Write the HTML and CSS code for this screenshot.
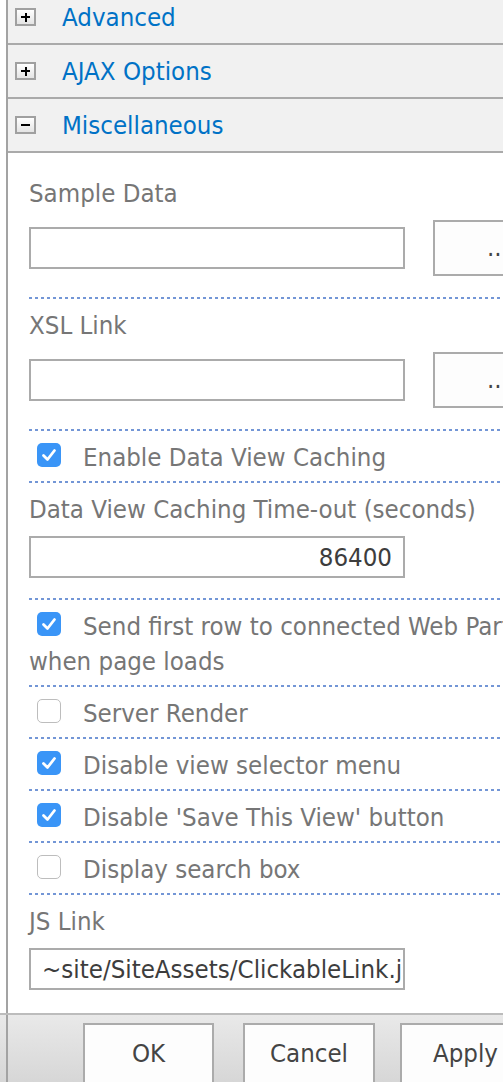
FILE: index.html
```html
<!DOCTYPE html>
<html lang="en">
<head>
<meta charset="utf-8">
<title>Tool Pane</title>
<link rel="stylesheet" href="styles.css">
</head>
<body>
<div class="frame">
  <div class="pane">
    <div class="headers">
      <div class="hdr"><span class="toggle"><span class="bar-h"></span><span class="bar-v"></span></span><span class="hdr-text">Advanced</span></div>
      <div class="hdr"><span class="toggle"><span class="bar-h"></span><span class="bar-v"></span></span><span class="hdr-text">AJAX Options</span></div>
      <div class="hdr"><span class="toggle"><span class="bar-h"></span></span><span class="hdr-text">Miscellaneous</span></div>
    </div>
    <div class="section">
      <div class="field first">
        <div class="label">Sample Data</div>
        <div class="ctl-row"><span class="input"></span><span class="btn-more">...</span></div>
      </div>
      <div class="field">
        <div class="label">XSL Link</div>
        <div class="ctl-row"><span class="input"></span><span class="btn-more">...</span></div>
      </div>
      <div class="check-row"><span class="cb on"><svg viewBox="0 0 24 24" width="24" height="24"><path d="M6.5 12.5 L10.5 16.5 L17.5 7.5" fill="none" stroke="#fff" stroke-width="2.8" stroke-linecap="round" stroke-linejoin="round"/></svg></span>Enable Data View Caching</div>
      <div class="field short">
        <div class="label">Data View Caching Time-out (seconds)</div>
        <div class="ctl-row"><span class="input num">86400</span></div>
      </div>
      <div class="check-row"><span class="cb on"><svg viewBox="0 0 24 24" width="24" height="24"><path d="M6.5 12.5 L10.5 16.5 L17.5 7.5" fill="none" stroke="#fff" stroke-width="2.8" stroke-linecap="round" stroke-linejoin="round"/></svg></span>Send first row to connected Web Part when page loads</div>
      <div class="check-row"><span class="cb"></span>Server Render</div>
      <div class="check-row"><span class="cb on"><svg viewBox="0 0 24 24" width="24" height="24"><path d="M6.5 12.5 L10.5 16.5 L17.5 7.5" fill="none" stroke="#fff" stroke-width="2.8" stroke-linecap="round" stroke-linejoin="round"/></svg></span>Disable view selector menu</div>
      <div class="check-row"><span class="cb on"><svg viewBox="0 0 24 24" width="24" height="24"><path d="M6.5 12.5 L10.5 16.5 L17.5 7.5" fill="none" stroke="#fff" stroke-width="2.8" stroke-linecap="round" stroke-linejoin="round"/></svg></span>Disable 'Save This View' button</div>
      <div class="check-row"><span class="cb"></span>Display search box</div>
      <div class="field last">
        <div class="label">JS Link</div>
        <div class="ctl-row"><span class="input text">~site/SiteAssets/ClickableLink.js</span></div>
      </div>
    </div>
  </div>
</div>
<div class="footer">
  <div class="footer-inner">
    <span class="fbtn">OK</span>
    <span class="fbtn cancel">Cancel</span>
    <span class="fbtn apply">Apply</span>
  </div>
</div>
</body>
</html>
```
FILE: styles.css
```css
html, body {
  margin: 0;
  padding: 0;
  overflow: hidden;
  background: #ffffff;
}
body {
  width: 503px;
  height: 1082px;
  font-family: "DejaVu Sans Condensed", "DejaVu Sans", sans-serif;
  font-stretch: condensed;
  font-size: 25.6px;
  line-height: 35px;
  color: #767676;
}
.frame {
  padding-left: 6px;
  width: 575px;
}
.pane {
  border-left: 2px solid #a3a3a3;
}
.headers {
  margin-top: -9px;
  background: #f1f1f1;
}
.hdr {
  height: 52px;
  border-bottom: 2px solid #aaaaaa;
  display: flex;
  align-items: center;
  padding-left: 7px;
}
.toggle {
  box-sizing: border-box;
  width: 21px;
  height: 18px;
  border: 2px solid #a0a0a0;
  background: linear-gradient(#ffffff, #e4e4e4);
  position: relative;
  margin-right: 26px;
  flex: none;
}
.bar-h {
  position: absolute;
  left: 4px;
  top: 6px;
  width: 9px;
  height: 2px;
  background: #000000;
}
.bar-v {
  position: absolute;
  left: 7.5px;
  top: 2.5px;
  width: 2px;
  height: 9px;
  background: #000000;
}
.hdr-text {
  color: #0072c6;
  white-space: nowrap;
}
.section {
  padding: 14px 21px 0 21px;
}
.field {
  padding: 9px 0 23px;
  background-image: repeating-linear-gradient(90deg, #7396d6 0 3px, transparent 3px 6px);
  background-size: 100% 2px;
  background-repeat: no-repeat;
  background-position: left bottom;
}
.field.short {
  padding-bottom: 22px;
}
.field.last {
  background-image: none;
  padding-bottom: 23px;
}
.label {
  white-space: nowrap;
  margin-bottom: 9px;
}
.ctl-row {
  display: flex;
  align-items: center;
}
.input {
  box-sizing: border-box;
  width: 376px;
  height: 42px;
  border: 2px solid #ababab;
  background: #ffffff;
  color: #3d3d3d;
  line-height: 38px;
  overflow: hidden;
  white-space: nowrap;
  flex: none;
}
.input.num {
  text-align: right;
  padding-right: 11px;
}
.input.text {
  padding-left: 11px;
}
.btn-more {
  box-sizing: border-box;
  width: 130px;
  height: 56px;
  margin-left: 28px;
  border: 2px solid #ababab;
  background: #fdfdfd;
  color: #444444;
  text-align: center;
  line-height: 50px;
  flex: none;
}
.check-row {
  padding: 9px 0 8px;
  background-image: repeating-linear-gradient(90deg, #7396d6 0 3px, transparent 3px 6px);
  background-size: 100% 2px;
  background-repeat: no-repeat;
  background-position: left bottom;
}
.cb {
  display: inline-block;
  box-sizing: border-box;
  width: 24px;
  height: 24px;
  margin-left: 8px;
  margin-right: 22px;
  border-radius: 5px;
  border: 1px solid #bdbdbd;
  background: #ffffff;
  vertical-align: -1px;
}
.cb.on {
  border: 0;
  background: #3a95f7;
}
.cb svg {
  display: block;
}
.footer {
  border-top: 2px solid #bcbcbc;
  height: 80px;
  background: linear-gradient(#e9e9e9, #d3d3d3);
}
.footer-inner {
  margin-left: 6px;
  border-left: 2px solid #a3a3a3;
  height: 100%;
  padding: 8px 0 0 75px;
  display: flex;
  width: 575px;
}
.fbtn {
  box-sizing: border-box;
  width: 131px;
  height: 66px;
  border: 2px solid #ababab;
  background: #fdfdfd;
  color: #444444;
  text-align: center;
  line-height: 56px;
  flex: none;
}
.fbtn.cancel {
  margin-left: 29px;
  width: 132px;
}
.fbtn.apply {
  margin-left: 25px;
}
```
